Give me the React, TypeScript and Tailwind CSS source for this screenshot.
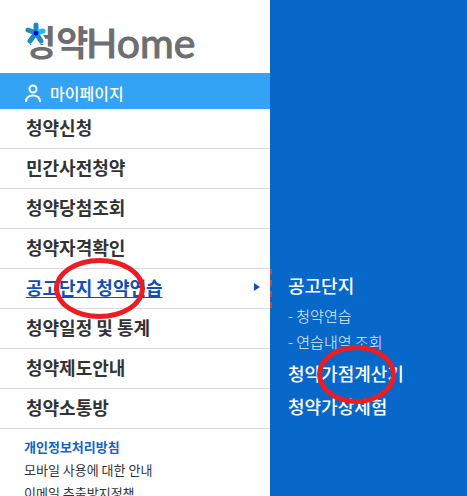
import clsx from "clsx"

type MenuItem = {
    label: string
    active?: boolean
    circled?: boolean
}

const menuItems: MenuItem[] = [
    { label: "청약신청" },
    { label: "민간사전청약" },
    { label: "청약당첨조회" },
    { label: "청약자격확인" },
    { label: "공고단지 청약연습", active: true, circled: true },
    { label: "청약일정 및 통계" },
    { label: "청약제도안내" },
    { label: "청약소통방" },
]

const footerLinks = [
    { label: "개인정보처리방침", strong: true },
    { label: "모바일 사용에 대한 안내" },
    { label: "이메일 추출방지정책" },
]

function Logo() {
    return (
        <a href="#" className="flex h-[73px] items-center pt-2 pl-6">
            <svg viewBox="0 0 180 56" className="h-14 w-[180px] overflow-visible" role="img" aria-label="청약Home">
                <text x="0" y="43" fontSize="35" fontWeight="700" fill="#6d6e71" className="font-['Noto_Sans_CJK_KR',sans-serif]">청약</text>
                <text x="62" y="45" fontSize="41" fill="#6d6e71" stroke="#6d6e71" strokeWidth="1" className="font-[Lato,sans-serif]">Home</text>
                {/* Star mark over the first letter */}
                <path d="M0 8H19V22L21 25V31H6V38H0Z" fill="#fff" />
                <g strokeWidth="5" strokeLinecap="round">
                    <path d="M12 20V12M12 20L4 17M12 20L6 28M12 20L17 28" stroke="#2089bd" />
                    <path d="M12 20L19 18" stroke="#0cc4f4" />
                </g>
                <circle cx="12" cy="20" r="2.500" fill="#0000f5" />
            </svg>
        </a>
    )
}

function MenuRow({ item }: { item: MenuItem }) {
    return (
        <li className="relative border-b border-[#dcdcdc]">
            <a
                href="#"
                className={clsx(
                    "flex h-[39px] items-center justify-between pr-[10px] pb-[3px] pl-[26px] text-lg font-bold",
                    item.active ? "text-[#124fb5]" : "text-[#333]"
                )}
            >
                <span className={clsx(item.active && "underline underline-offset-2")}>{item.label}</span>
                {item.active && (
                    <svg viewBox="0 0 6 8" className="h-2 w-[6px]" aria-hidden="true">
                        <path d="M0 0L6 4L0 8Z" fill="#124fb5" />
                    </svg>
                )}
            </a>
            {item.active && <span className="absolute inset-y-0 -right-[2px] w-0 border-r-2 border-dashed border-[#c9463f]" />}
            {item.circled && (
                <span className="absolute -top-[11px] left-[54px] h-[61px] w-[91px] rounded-[50%] border-[5px] border-[#ec1c24]" />
            )}
        </li>
    )
}

export default function App() {
    return (
        <div className="flex h-screen overflow-hidden bg-white font-['Noto_Sans_CJK_KR',sans-serif]">
            {/* Main menu */}
            <nav className="relative z-10 w-[270px] shrink-0">
                <Logo />
                <a href="#" className="flex h-9 items-center gap-2 bg-[#33a3f5] pt-1 pl-6 text-base font-medium text-white">
                    <svg viewBox="0 0 18 18" className="h-[18px] w-[18px]" fill="none" stroke="#fff" strokeWidth="2" aria-hidden="true">
                        <circle cx="9" cy="5" r="3.500" />
                        <path d="M2 18C2 13.500 5 11.500 9 11.500S16 13.500 16 18" />
                    </svg>
                    마이페이지
                </a>
                <ul>
                    {menuItems.map(item => (
                        <MenuRow key={item.label} item={item} />
                    ))}
                </ul>
                <ul className="pt-[6px] pl-6 text-[13px] leading-[23px] text-[#333]">
                    {footerLinks.map(link => (
                        <li key={link.label}>
                            <a href="#" className={clsx(link.strong && "font-bold text-[#1463c8]")}>{link.label}</a>
                        </li>
                    ))}
                </ul>
            </nav>

            {/* Submenu */}
            <section className="flex-1 bg-[#0768c9] pt-[269px] pl-[18px] text-lg leading-[33px] font-medium text-white">
                <a href="#" className="block">공고단지</a>
                <ul className="pt-px pb-[2px] text-[15px] leading-[26px] font-light text-[#e3effb]">
                    <li><a href="#">- 청약연습</a></li>
                    <li><a href="#">- 연습내역 조회</a></li>
                </ul>
                <a href="#" className="relative block">
                    청약가점계산기
                    <span className="absolute -top-[12px] left-[29px] h-[59px] w-[79px] rounded-[50%] border-[5px] border-[#ec1c24]" />
                </a>
                <a href="#" className="block">청약가상체험</a>
            </section>
        </div>
    )
}
